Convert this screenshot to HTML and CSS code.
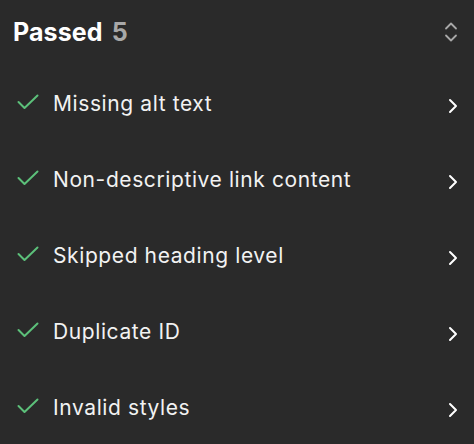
FILE: index.html
```html
<!DOCTYPE html>
<html>
<head>
<meta charset="utf-8">
<link rel="stylesheet" href="styles.css">
</head>
<body>
<div class="panel">
  <div class="header">
    <div class="title">Passed <span class="count">5</span></div>
    <svg class="sort" width="14" height="22" viewBox="0 0 14 22"><path d="M2 7.5 L7 2.5 L12 7.5 M2 14.5 L7 19.5 L12 14.5" fill="none" stroke="#a8a8a8" stroke-width="1.8" stroke-linecap="round" stroke-linejoin="round"/></svg>
  </div>
  <ul class="list">
    <li class="row"><svg class="check" width="22" height="16" viewBox="0 0 22 16"><path d="M1.5 8 L7.5 14 L20.5 1.5" fill="none" stroke="#5cc07a" stroke-width="2" stroke-linecap="round" stroke-linejoin="round"/></svg><span class="label">Missing alt text</span><svg class="chev" width="10" height="16" viewBox="0 0 10 16"><path d="M2 2 L8 8 L2 14" fill="none" stroke="#fff" stroke-width="2" stroke-linecap="round" stroke-linejoin="round"/></svg></li>
    <li class="row"><svg class="check" width="22" height="16" viewBox="0 0 22 16"><path d="M1.5 8 L7.5 14 L20.5 1.5" fill="none" stroke="#5cc07a" stroke-width="2" stroke-linecap="round" stroke-linejoin="round"/></svg><span class="label">Non-descriptive link content</span><svg class="chev" width="10" height="16" viewBox="0 0 10 16"><path d="M2 2 L8 8 L2 14" fill="none" stroke="#fff" stroke-width="2" stroke-linecap="round" stroke-linejoin="round"/></svg></li>
    <li class="row"><svg class="check" width="22" height="16" viewBox="0 0 22 16"><path d="M1.5 8 L7.5 14 L20.5 1.5" fill="none" stroke="#5cc07a" stroke-width="2" stroke-linecap="round" stroke-linejoin="round"/></svg><span class="label">Skipped heading level</span><svg class="chev" width="10" height="16" viewBox="0 0 10 16"><path d="M2 2 L8 8 L2 14" fill="none" stroke="#fff" stroke-width="2" stroke-linecap="round" stroke-linejoin="round"/></svg></li>
    <li class="row"><svg class="check" width="22" height="16" viewBox="0 0 22 16"><path d="M1.5 8 L7.5 14 L20.5 1.5" fill="none" stroke="#5cc07a" stroke-width="2" stroke-linecap="round" stroke-linejoin="round"/></svg><span class="label">Duplicate ID</span><svg class="chev" width="10" height="16" viewBox="0 0 10 16"><path d="M2 2 L8 8 L2 14" fill="none" stroke="#fff" stroke-width="2" stroke-linecap="round" stroke-linejoin="round"/></svg></li>
    <li class="row"><svg class="check" width="22" height="16" viewBox="0 0 22 16"><path d="M1.5 8 L7.5 14 L20.5 1.5" fill="none" stroke="#5cc07a" stroke-width="2" stroke-linecap="round" stroke-linejoin="round"/></svg><span class="label">Invalid styles</span><svg class="chev" width="10" height="16" viewBox="0 0 10 16"><path d="M2 2 L8 8 L2 14" fill="none" stroke="#fff" stroke-width="2" stroke-linecap="round" stroke-linejoin="round"/></svg></li>
  </ul>
</div>
</body>
</html>
```
FILE: styles.css
```css
html, body {
  margin: 0;
  padding: 0;
  background: #2a2a2a;
}
body {
  font-family: Inter, "Noto Sans", sans-serif;
  color: #fff;
  width: 474px;
  height: 444px;
  overflow: hidden;
}
.panel {
  display: flex;
  flex-direction: column;
}
.header {
  height: 64px;
  display: flex;
  align-items: center;
  justify-content: space-between;
  padding: 0 16px 0 13px;
}
.title {
  font-size: 25px;
  font-weight: 700;
  letter-spacing: 0.1px;
  margin-top: -1px;
}
.count {
  color: #a8a8a8;
  margin-left: 3px;
}
.sort {
  display: block;
}
.list {
  list-style: none;
  margin: 0;
  padding: 0;
}
.row {
  height: 76px;
  display: flex;
  align-items: center;
  padding: 0 16px 0 17px;
}
.check {
  display: block;
  flex: none;
  margin-right: 14px;
}
.label {
  flex: 1;
  font-size: 21px;
  letter-spacing: 0.6px;
  font-weight: 400;
  color: #f2f2f2;
  margin-top: 3px;
}
.chev {
  display: block;
  flex: none;
  margin-top: 7px;
}
```
